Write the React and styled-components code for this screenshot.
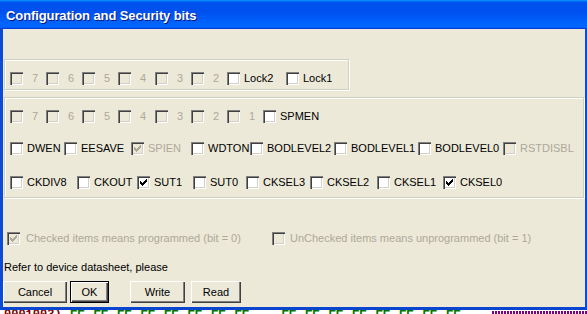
import React from "react";
import styled, { createGlobalStyle } from "styled-components";

const Global = createGlobalStyle`
  html, body { margin: 0; padding: 0; background: #fff; }
  body { font-family: "Liberation Sans", Arial, sans-serif; font-size: 11px; }
`;

const Window = styled.div`
  width: 587px;
  height: 314px;
  overflow: hidden;
  display: flex;
  flex-direction: column;
`;

const TitleBar = styled.div`
  height: 29px;
  flex: 0 0 29px;
  box-sizing: border-box;
  padding: 0 0 0 6px;
  display: flex;
  align-items: center;
  background: linear-gradient(180deg, #0997ff, #0053ee 8%, #0050ee 40%, #0066ff 88%, #0066ff 93%, #005bff 95%, #003dd7 96%, #003dd7);
`;

const Title = styled.span`
  font-family: "Liberation Sans", Arial, sans-serif;
  font-weight: bold;
  font-size: 13px;
  color: #fff;
  text-shadow: 1px 1px 0 #0a1883;
  padding-top: 2px;
  letter-spacing: -0.1px;
`;

const Frame = styled.div`
  border-left: 3px solid #0b4bd6;
  border-right: 2px solid #0b4bd6;
  border-bottom: 3px solid #0a45d0;
  box-shadow: 0 1px 0 #00208a;
`;

const Body = styled.div`
  background: #ece9d8;
  height: 278px;
  box-sizing: border-box;
  padding: 0 0 4px 1px;
  display: flex;
  flex-direction: column;
`;

const GroupBox = styled.div`
  box-sizing: border-box;
  width: ${(p) => (p.$w ? `${p.$w}px` : "auto")};
  margin-right: ${(p) => (p.$w ? 0 : 1)}px;
  height: ${(p) => p.$h}px;
  margin-top: ${(p) => p.$mt}px;
  border: 1px solid #d0d0bf;
  box-shadow: inset 1px 1px 0 #fff, 1px 1px 0 #fff;
  padding: ${(p) => p.$pt}px 0 0 5px;
  display: flex;
  flex-direction: column;
`;

const Row = styled.div`
  display: flex;
  align-items: center;
  height: 13px;
  margin-top: ${(p) => p.$mt || 0}px;
  padding-left: ${(p) => p.$pl || 0}px;
`;

const Item = styled.div`
  display: flex;
  align-items: center;
  flex: ${(p) => (p.$w ? `0 0 ${p.$w}px` : "0 0 auto")};
  overflow: hidden;
  white-space: nowrap;
  color: ${(p) => (p.$disabled ? "#aca899" : "#000")};
  height: 13px;
`;

const Box = styled.span`
  flex: 0 0 13px;
  width: 13px;
  height: 13px;
  box-sizing: border-box;
  background: ${(p) => (p.$disabled ? "#ece9d8" : "#fff")};
  box-shadow: inset 1px 1px 0 #808080, inset 2px 2px 0 #404040, inset -1px -1px 0 #fff, inset -2px -2px 0 #d4d0c8;
  display: block;
  svg { display: block; }
`;

const Text = styled.span`
  margin-left: ${(p) => p.$gap}px;
  line-height: 13px;
`;

const Note = styled.div`
  margin-top: 16px;
  height: 13px;
  line-height: 13px;
  padding-left: 0;
  color: #000;
`;

const ButtonBar = styled.div`
  display: flex;
  margin-top: 7px;
  height: 22px;
`;

const Button = styled.button`
  box-sizing: border-box;
  width: ${(p) => p.$w}px;
  height: 22px;
  margin-left: ${(p) => p.$ml || 0}px;
  padding: 0;
  background: #ece9d8;
  font-family: "Liberation Sans", Arial, sans-serif;
  font-size: 11px;
  color: #000;
  border: ${(p) => (p.$default ? "1px solid #000" : "none")};
  box-shadow: inset 1px 1px 0 #fff, inset -1px -1px 0 #404040, inset -2px -2px 0 #808080;
`;

const Strip = styled.div`
  height: 4px;
  overflow: hidden;
  background: #fff;
  display: flex;
  align-items: flex-start;
  padding-left: 4px;
  padding-top: 1px;
`;

const Addr = styled.span`
  font-family: "Liberation Mono", monospace;
  font-weight: bold;
  font-size: 12px;
  line-height: 9px;
  color: #800000;
  width: 66px;
  flex: 0 0 66px;
`;

const Hex = styled.span`
  font-family: "Liberation Sans", Arial, sans-serif;
  font-weight: bold;
  font-size: 12px;
  line-height: 9px;
  color: #007800;
  flex: 0 0 23.5px;
  width: 23.5px;
`;

const Dots = styled.span`
  margin-left: 22px;
  flex: 1;
  height: 3px;
  background: repeating-linear-gradient(90deg, #800080 0 2px, transparent 2px 3px);
`;

const Check = ({ color }) => (
  <svg width="13" height="13" viewBox="0 0 13 13" shapeRendering="crispEdges">
    <g fill={color}>
      <rect x="9" y="3" width="1" height="1" />
      <rect x="8" y="4" width="2" height="1" />
      <rect x="3" y="5" width="1" height="1" />
      <rect x="7" y="5" width="3" height="1" />
      <rect x="3" y="6" width="2" height="1" />
      <rect x="6" y="6" width="3" height="1" />
      <rect x="3" y="7" width="5" height="1" />
      <rect x="4" y="8" width="3" height="1" />
      <rect x="5" y="9" width="1" height="1" />
    </g>
  </svg>
);

const CheckItem = ({ label, w, disabled, checked, gap = 4 }) => (
  <Item $w={w} $disabled={disabled}>
    <Box $disabled={disabled}>{checked && <Check color={disabled ? "#aca899" : "#000"} />}</Box>
    <Text $gap={gap}>{label}</Text>
  </Item>
);

const digits = (list, widths) =>
  list.map((d, i) => ({ label: d, w: widths[i], disabled: true, gap: 9 }));

const row1 = [
  ...digits(["7", "6", "5", "4", "3", "2"], [36, 36, 36, 37, 36, 36]),
  { label: "Lock2", w: 59 },
  { label: "Lock1" },
];
const row2 = [
  ...digits(["7", "6", "5", "4", "3", "2", "1"], [36, 36, 36, 37, 36, 36, 36]),
  { label: "SPMEN" },
];
const row3 = [
  { label: "DWEN", w: 54 },
  { label: "EESAVE", w: 67 },
  { label: "SPIEN", w: 60, disabled: true, checked: true },
  { label: "WDTON", w: 59 },
  { label: "BODLEVEL2", w: 84 },
  { label: "BODLEVEL1", w: 84 },
  { label: "BODLEVEL0", w: 85 },
  { label: "RSTDISBL", disabled: true },
];
const row4 = [
  { label: "CKDIV8", w: 67 },
  { label: "CKOUT", w: 60 },
  { label: "SUT1", w: 56, checked: true },
  { label: "SUT0", w: 53 },
  { label: "CKSEL3", w: 64 },
  { label: "CKSEL2", w: 67 },
  { label: "CKSEL1", w: 66 },
  { label: "CKSEL0", checked: true },
];

const renderRow = (items) => items.map((it, i) => <CheckItem key={i} {...it} />);

const hexes = ["FF", "FF", "FF", "FF", "FF", "FF", "FF", "FF", "", "FF", "FF", "FF", "FF", "FF", "FF", "FF", "FF"];

export default function App() {
  return (
    <>
      <Global />
      <Window>
        <TitleBar>
          <Title>Configuration and Security bits</Title>
        </TitleBar>
        <Frame>
          <Body>
            <GroupBox $w={345} $h={31} $mt={30} $pt={12}>
              <Row>{renderRow(row1)}</Row>
            </GroupBox>
            <GroupBox $h={101} $mt={7} $pt={12}>
              <Row>{renderRow(row2)}</Row>
              <Row $mt={19}>{renderRow(row3)}</Row>
              <Row $mt={21}>{renderRow(row4)}</Row>
            </GroupBox>
            <Row $mt={34} $pl={3}>
              <CheckItem label="Checked items means programmed (bit = 0)" w={265} disabled checked gap={6} />
              <CheckItem label="UnChecked items means unprogrammed (bit = 1)" disabled gap={5} />
            </Row>
            <Note>Refer to device datasheet, please</Note>
            <ButtonBar>
              <Button $w={64} $ml={-1}>Cancel</Button>
              <Button $w={39} $ml={3} $default>OK</Button>
              <Button $w={55} $ml={21}>Write</Button>
              <Button $w={50} $ml={6}>Read</Button>
            </ButtonBar>
          </Body>
        </Frame>
        <Strip>
          <Addr>0001003)</Addr>
          {hexes.map((h, i) => (
            <Hex key={i}>{h}</Hex>
          ))}
          <Dots />
        </Strip>
      </Window>
    </>
  );
}
